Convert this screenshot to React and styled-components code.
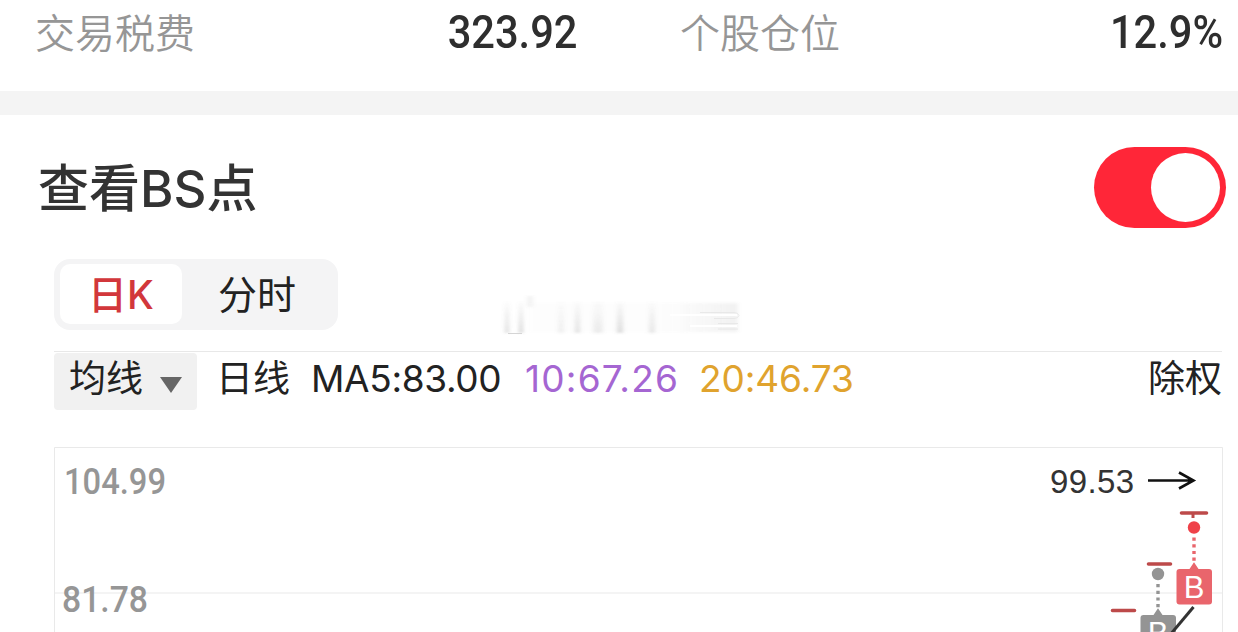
import React, { useState } from 'react';
import styled, { createGlobalStyle } from 'styled-components';

const GlobalStyle = createGlobalStyle`
  * {
    box-sizing: border-box;
  }

  body {
    margin: 0;
    background: #fff;
    overflow: hidden;
    font-family: Inter, 'Noto Sans CJK SC', sans-serif;
    color: #222;
  }
`;

const Page = styled.div`
  width: 1238px;
  height: 632px;
  overflow: hidden;
  background: #fff;
`;

const StatsRow = styled.div`
  display: grid;
  grid-template-columns: 543px 543px;
  column-gap: 102px;
  height: 91px;
  padding-left: 35px;
`;

const Stat = styled.div`
  display: flex;
  justify-content: space-between;
  height: 66px;
  line-height: 65px;
  white-space: nowrap;
`;

const StatLabel = styled.span`
  font-family: 'Noto Sans CJK SC', sans-serif;
  font-size: 40px;
  font-weight: 350;
  line-height: 63px;
  color: #969696;
`;

const StatValue = styled.span`
  font-family: Roboto, sans-serif;
  font-size: 46px;
  font-weight: 500;
  color: #2e2e2e;
  transform: scaleX(${props => props.$stretch});
  transform-origin: right;
`;

const SectionGap = styled.div`
  height: 24px;
  background: #f4f4f4;
`;

const SectionHeader = styled.div`
  display: flex;
  align-items: center;
  justify-content: space-between;
  height: 144px;
  padding: 0 12px 0 38px;
`;

const SectionTitle = styled.h2`
  margin: 0;
  font-size: 51px;
  font-weight: 450;
  line-height: 72px;
  color: #333;
`;

const TitleHan = styled.span`
  font-family: 'Noto Sans CJK SC', sans-serif;
  font-weight: 500;
`;

const Toggle = styled.button`
  display: flex;
  align-items: center;
  justify-content: ${props => props.$on ? 'flex-end' : 'flex-start'};
  width: 132px;
  height: 81px;
  padding: 0 6px;
  border: 0;
  border-radius: 41px;
  background: ${props => props.$on ? '#ff2638' : '#ddd'};
  cursor: pointer;
`;

const ToggleKnob = styled.span`
  width: 69px;
  height: 69px;
  border-radius: 50%;
  background: #fff;
`;

const TabRow = styled.div`
  display: flex;
  align-items: flex-start;
  height: 92px;
  padding-left: 54px;
`;

const Tabs = styled.div`
  display: flex;
  width: 284px;
  height: 71px;
  padding: 5px 6px 6px;
  border-radius: 16px;
  background: #f4f4f5;
`;

const Tab = styled.button`
  width: ${props => props.$active ? '122px' : '150px'};
  height: 60px;
  padding: 2px 0 0;
  border: 0;
  border-radius: 10px;
  background: ${props => props.$active ? '#fff' : 'transparent'};
  color: ${props => props.$active ? '#d2373b' : '#222'};
  font-family: Inter, 'Noto Sans CJK SC', sans-serif;
  font-size: 39px;
  font-weight: ${props => props.$active ? 500 : 400};
  line-height: 58px;
  cursor: pointer;
`;

const FadedMark = styled.svg`
  margin: 36px 0 0 162px;
`;

const Indicators = styled.div`
  display: flex;
  align-items: flex-start;
  height: 96px;
  margin: 0 16px 0 54px;
  padding-top: 1px;
  border-top: 1px solid #e8e8e8;
  font-size: 37px;
  line-height: 52px;
  white-space: nowrap;
`;

const Dropdown = styled.div`
  display: flex;
  align-items: center;
  justify-content: space-between;
  width: 143px;
  height: 57px;
  padding: 0 15px 5px;
  border-radius: 4px;
  background: #f1f1f1;
`;

const Caret = styled.svg`
  margin-top: 11px;
`;

const Period = styled.span`
  margin-left: 19px;
`;

const Average = styled.span`
  width: ${props => props.$width}px;
  margin-left: ${props => props.$gap}px;
  letter-spacing: ${props => props.$spacing}px;
  color: ${props => props.$color};
`;

const Adjust = styled.span`
  margin-left: auto;
`;

const Chart = styled.svg`
  display: block;
  margin-left: 54px;
`;

const stats = [
  { label: '交易税费', value: '323.92', stretch: 0.905 },
  { label: '个股仓位', value: '12.9%', stretch: 0.905 },
];

const averages = [
  { text: 'MA5:83.00', color: '#222', width: 190, gap: 21, spacing: -0.35 },
  { text: '10:67.26', color: '#a566d2', width: 153, gap: 24, spacing: 1.2 },
  { text: '20:46.73', color: '#e0a32e', width: 155, gap: 21, spacing: -0.1 },
];

// vertical streaks: x, width, opacity
const streaks = [
  [5, 4, 0.2],
  [19, 4, 0.24],
  [58, 6, 0.08],
  [75, 5, 0.16],
  [93, 10, 0.1],
  [117, 6, 0.19],
  [149, 6, 0.13],
];

function Smudge() {
  return (
    <FadedMark width="244" height="44" viewBox="0 0 244 44">
      <defs>
        <linearGradient id="streak" x1="0" y1="0" x2="0" y2="1">
          <stop offset="0" stopColor="#777" stopOpacity="0.1" />
          <stop offset="1" stopColor="#777" />
        </linearGradient>
        <linearGradient id="sweep">
          <stop offset="0" stopColor="#777" stopOpacity="0" />
          <stop offset="1" stopColor="#777" stopOpacity="0.22" />
        </linearGradient>
        <filter id="soften" x="-10%" y="-10%" width="120%" height="120%">
          <feGaussianBlur stdDeviation="2 0.8" />
        </filter>
      </defs>
      <g filter="url(#soften)">
        {streaks.map(([x, width, opacity]) => (
          <rect key={x} x={x} y="7" width={width} height="31" fill="url(#streak)" opacity={opacity * 1.3} />
        ))}
        <rect x="27" y="1" width="6" height="11" fill="#777" opacity="0.08" />
        <rect x="30" y="8" width="140" height="29" fill="#777" opacity="0.015" />
        <rect x="160" y="8" width="78" height="29" fill="url(#sweep)" opacity="0.45" />
      </g>
      <path d="M8 38.5h14" stroke="#d5d5d5" strokeWidth="1" />
      <path d="M170 20H237M190 31H237" stroke="#fff" strokeWidth="2" />
      <path d="M200 17.5H234q4 0 5 3q-1 3-5 3H214M218 28.5H238M218 34H238" fill="none" stroke="#e4e4e4" strokeWidth="0.8" />
    </FadedMark>
  );
}

function TradeMark({ x, y, color, dotColor, dotY }) {
  return (
    <g>
      <circle cx={x} cy={dotY} r="6.2" fill={dotColor} />
      <path d={`M${x} ${dotY + 10}V${y - 2}`} stroke={color} strokeWidth="3.4" strokeDasharray="3.2 3.5" />
      <path d={`M${x - 4} ${y + 6}L${x} ${y}L${x + 4} ${y + 6}Z`} fill={color} stroke={color} strokeWidth="2" />
      <rect x={x - 17.5} y={y + 5} width="35.5" height="35.5" rx="3" fill={color} />
      <text x={x} y={y + 34} textAnchor="middle" fontFamily="'Liberation Sans', sans-serif" fontSize="31" fill="#fff">B</text>
    </g>
  );
}

function PriceChart() {
  return (
    <Chart width="1184" height="185" viewBox="54 447 1184 185">
      <path d="M54.5 632V447.5H1222.5V632" fill="none" stroke="#e9e9e9" />
      <path d="M55 593H1222" stroke="#f4f4f4" strokeWidth="2" />
      <g fontFamily="Roboto, sans-serif" fontSize="37" fontWeight="500" fill="#969696">
        <text x="64" y="494" textLength="102" lengthAdjust="spacingAndGlyphs">104.99</text>
        <text x="62" y="612" textLength="86" lengthAdjust="spacingAndGlyphs">81.78</text>
      </g>
      <text x="1050" y="493" textLength="84" fontFamily="'Liberation Sans', sans-serif" fontSize="33" fill="#333">99.53</text>
      <path d="M1148 480.5H1193M1179 472.5L1193.5 480.5L1179 488.5" fill="none" stroke="#111" strokeWidth="2.6" />
      <path d="M1181.5 513H1206.5M1148.5 564H1170.5M1112.5 610.5H1134.5" stroke="#bd4a4a" strokeWidth="3.6" strokeLinecap="round" />
      <path d="M1193 514v4" stroke="#bd4a4a" strokeWidth="3" />
      <TradeMark x={1158} y={610} color="#949494" dotColor="#949494" dotY={574} />
      <TradeMark x={1194} y={564} color="#e9656c" dotColor="#ef4149" dotY={527.5} />
      <path d="M1170 635L1193.5 607" stroke="#333" strokeWidth="3" />
    </Chart>
  );
}

function App() {
  const [showPoints, setShowPoints] = useState(true);
  const [tab, setTab] = useState('day');

  return (
    <Page>
      <GlobalStyle />
      <StatsRow>
        {stats.map(({ label, value, stretch }) => (
          <Stat key={label}>
            <StatLabel>{label}</StatLabel>
            <StatValue $stretch={stretch}>{value}</StatValue>
          </Stat>
        ))}
      </StatsRow>
      <SectionGap />

      <SectionHeader>
        <SectionTitle>
          <TitleHan>查看</TitleHan>BS<TitleHan>点</TitleHan>
        </SectionTitle>
        <Toggle $on={showPoints} onClick={() => setShowPoints(!showPoints)}>
          <ToggleKnob />
        </Toggle>
      </SectionHeader>

      <TabRow>
        <Tabs>
          <Tab $active={tab === 'day'} onClick={() => setTab('day')}>日K</Tab>
          <Tab $active={tab === 'minute'} onClick={() => setTab('minute')}>分时</Tab>
        </Tabs>
        <Smudge />
      </TabRow>

      <Indicators>
        <Dropdown>
          均线
          <Caret width="22" height="16" viewBox="0 0 22 16">
            <path d="M0 0H22L11 16Z" fill="#666" />
          </Caret>
        </Dropdown>
        <Period>日线</Period>
        {averages.map(({ text, color, width, gap, spacing }) => (
          <Average key={text} $color={color} $width={width} $gap={gap} $spacing={spacing}>
            {text}
          </Average>
        ))}
        <Adjust>除权</Adjust>
      </Indicators>

      {showPoints && <PriceChart />}
    </Page>
  );
}

export default App;
